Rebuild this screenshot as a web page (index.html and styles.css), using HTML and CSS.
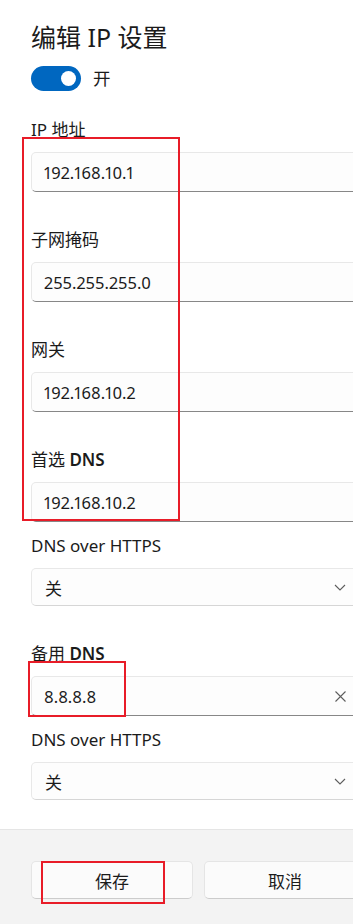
FILE: index.html
```html
<!DOCTYPE html>
<html lang="zh-CN">
<head>
    <meta charset="UTF-8">
    <meta name="viewport" content="width=device-width, initial-scale=1.0">
    <title>编辑 IP 设置</title>
    <link rel="stylesheet" href="styles.css">
</head>
<body>
    <div class="dialog">
        <div class="content">
            <h1>编辑 IP 设置</h1>
            <div class="toggle-row">
                <span class="toggle"><span class="knob"></span></span>
                <span class="toggle-text">开</span>
            </div>

            <div class="field field-first">
                <label>IP 地址</label>
                <div class="textbox"><input type="text" value="192.168.10.1"></div>
            </div>
            <div class="field">
                <label>子网掩码</label>
                <div class="textbox"><input type="text" value="255.255.255.0"></div>
            </div>
            <div class="field">
                <label>网关</label>
                <div class="textbox"><input type="text" value="192.168.10.2"></div>
            </div>
            <div class="field">
                <label>首选 <b>DNS</b></label>
                <div class="textbox"><input type="text" value="192.168.10.2"></div>
            </div>
            <div class="field field-sub">
                <label>DNS over HTTPS</label>
                <div class="combo">
                    <span>关</span>
                    <svg width="12" height="7" viewBox="0 0 12 7"><path d="M1 1l5 5 5-5" fill="none" stroke="#5d5d5d" stroke-width="1.1"/></svg>
                </div>
            </div>
            <div class="field">
                <label>备用 <b>DNS</b></label>
                <div class="textbox">
                    <input type="text" value="8.8.8.8">
                    <svg class="clear" width="11" height="11" viewBox="0 0 11 11"><path d="M0.5 0.5l10 10M10.5 0.5l-10 10" fill="none" stroke="#5d5d5d" stroke-width="1.1"/></svg>
                </div>
            </div>
            <div class="field field-sub">
                <label>DNS over HTTPS</label>
                <div class="combo">
                    <span>关</span>
                    <svg width="12" height="7" viewBox="0 0 12 7"><path d="M1 1l5 5 5-5" fill="none" stroke="#5d5d5d" stroke-width="1.1"/></svg>
                </div>
            </div>
        </div>
        <div class="footer">
            <button class="btn">保存</button>
            <button class="btn">取消</button>
        </div>
    </div>

    <!-- annotation boxes drawn over the screenshot -->
    <div class="mark mark-1"></div>
    <div class="mark mark-2"></div>
    <div class="mark mark-3"></div>
</body>
</html>
```

FILE: styles.css
```css
html, body {
    margin: 0;
    padding: 0;
    overflow: hidden;
    background: #fff;
}
body {
    font-family: 'Noto Sans', 'Noto Sans CJK SC', sans-serif;
    color: #1b1b1b;
    position: relative;
    height: 924px;
}
.dialog {
    width: 397px;
    height: 924px;
    display: flex;
    flex-direction: column;
}
.content {
    flex: 1;
    padding: 21px 31px 0 31px;
}
h1 {
    margin: 0;
    font-size: 25px;
    line-height: 33px;
    font-weight: 400;
}
.toggle-row {
    margin-top: 12px;
    display: flex;
    align-items: center;
    gap: 12px;
    height: 25px;
}
.toggle {
    width: 50px;
    height: 25px;
    border-radius: 13px;
    background: #0067c0;
    display: flex;
    align-items: center;
    justify-content: flex-end;
    padding-right: 5px;
    box-sizing: border-box;
}
.knob {
    width: 15px;
    height: 15px;
    border-radius: 50%;
    background: #fff;
}
.toggle-text {
    font-size: 17.5px;
    line-height: 25px;
}
.field {
    margin-top: 36px;
}
.field-first {
    margin-top: 27px;
}
.field-sub {
    margin-top: 12px;
}
label {
    display: block;
    font-size: 17px;
    line-height: 24px;
    margin-bottom: 10px;
}
label b {
    font-weight: 600;
}
.textbox, .combo {
    box-sizing: border-box;
    height: 40px;
    border: 1px solid #e8e8e8;
    border-bottom-color: #878787;
    border-radius: 5px;
    background: #fdfdfd;
    display: flex;
    align-items: center;
    padding: 0 19px 0 12px;
}
.textbox input {
    flex: 1;
    border: none;
    outline: none;
    background: transparent;
    font-family: inherit;
    font-size: 16.5px;
    font-variant-numeric: proportional-nums;
    color: #1b1b1b;
    padding: 0;
    min-width: 0;
}
.combo {
    height: 38px;
    border-bottom-color: #d6d6d6;
    justify-content: space-between;
    padding-left: 13px;
    font-size: 17px;
}
.footer {
    height: 95px;
    box-sizing: border-box;
    background: #f3f3f3;
    border-top: 1px solid #e5e5e5;
    padding: 31px 31px 0 31px;
    display: flex;
    gap: 11px;
}
.btn {
    width: 162px;
    height: 38px;
    box-sizing: border-box;
    border: 1px solid #e5e5e5;
    border-bottom-color: #cccccc;
    border-radius: 5px;
    background: #fbfbfb;
    font-family: inherit;
    font-size: 17px;
    color: #1b1b1b;
    padding: 0;
}
.mark {
    position: absolute;
    border: 2px solid #e81c28;
    box-sizing: border-box;
}
.mark-1 {
    left: 22px;
    top: 137px;
    width: 158px;
    height: 384px;
}
.mark-2 {
    left: 28px;
    top: 661px;
    width: 98px;
    height: 56px;
}
.mark-3 {
    left: 41px;
    top: 861px;
    width: 124px;
    height: 43px;
}
```
